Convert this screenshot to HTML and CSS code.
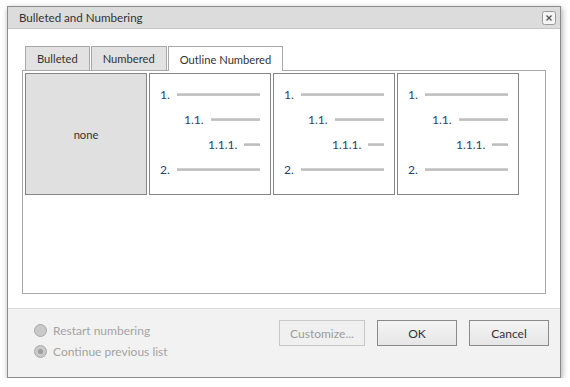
FILE: index.html
```html
<!DOCTYPE html>
<html>
<head>
<meta charset="utf-8">
<link rel="stylesheet" href="styles.css">
</head>
<body>
<div class="dialog">
  <div class="titlebar">
    <span class="title">Bulleted and Numbering</span>
    <span class="close">
      <svg width="14" height="14" viewBox="0 0 14 14"><rect x="0.5" y="0.5" width="13" height="13" rx="2" fill="#f4f4f4" stroke="#9a9a9a"/><path d="M4.5 4.5 L9.5 9.5 M9.5 4.5 L4.5 9.5" stroke="#555" stroke-width="1.3"/></svg>
    </span>
  </div>
  <div class="body">
    <div class="tabs">
      <div class="tab">Bulleted</div>
      <div class="tab">Numbered</div>
      <div class="tab active">Outline Numbered</div>
    </div>
    <div class="panel">
      <div class="item none">none</div>
      <div class="item">
        <div class="row l1"><span class="num">1.</span><span class="line"></span></div>
        <div class="row l2"><span class="num">1.1.</span><span class="line"></span></div>
        <div class="row l3"><span class="num">1.1.1.</span><span class="line"></span></div>
        <div class="row l1"><span class="num">2.</span><span class="line"></span></div>
      </div>
      <div class="item">
        <div class="row l1"><span class="num">1.</span><span class="line"></span></div>
        <div class="row l2"><span class="num">1.1.</span><span class="line"></span></div>
        <div class="row l3"><span class="num">1.1.1.</span><span class="line"></span></div>
        <div class="row l1"><span class="num">2.</span><span class="line"></span></div>
      </div>
      <div class="item">
        <div class="row l1"><span class="num">1.</span><span class="line"></span></div>
        <div class="row l2"><span class="num">1.1.</span><span class="line"></span></div>
        <div class="row l3"><span class="num">1.1.1.</span><span class="line"></span></div>
        <div class="row l1"><span class="num">2.</span><span class="line"></span></div>
      </div>
    </div>
  </div>
  <div class="footer">
    <div class="radios">
      <div class="radio"><span class="dot"></span>Restart numbering</div>
      <div class="radio"><span class="dot checked"></span>Continue previous list</div>
    </div>
    <div class="buttons">
      <div class="btn disabled wide">Customize...</div>
      <div class="btn">OK</div>
      <div class="btn">Cancel</div>
    </div>
  </div>
</div>
</body>
</html>
```
FILE: styles.css
```css
html, body {
  margin: 0;
  padding: 0;
  background: #ffffff;
}
body {
  font-family: "Lato", "Noto Sans", sans-serif;
  font-size: 11.2px;
  color: #333333;
}
.dialog {
  margin: 6px 0 0 7px;
  width: 554px;
  height: 372px;
  box-sizing: border-box;
  border: 1px solid #8c8c8c;
  background: #ffffff;
  box-shadow: 1px 2px 6px rgba(0,0,0,0.35);
  display: flex;
  flex-direction: column;
}
.titlebar {
  height: 22px;
  box-sizing: border-box;
  background: #dcdcdc;
  border-bottom: 1px solid #c4c4c4;
  display: flex;
  align-items: center;
  justify-content: space-between;
  padding: 0 4px 0 11px;
}
.title {
  color: #333;
  font-size: 11.6px;
}
.close {
  display: flex;
  margin-top: 1px;
}
.body {
  height: 279px;
  box-sizing: border-box;
  padding: 17px 14px 0 14px;
}
.tabs {
  display: flex;
  gap: 1px;
  padding-left: 3px;
  height: 24px;
}
.tab {
  box-sizing: border-box;
  height: 24px;
  padding: 0 11px;
  border: 1px solid #a8a8a8;
  border-bottom: none;
  background: #e2e2e2;
  display: flex;
  align-items: center;
  color: #333;
}
.tab.active {
  background: #ffffff;
  height: 25px;
  position: relative;
  z-index: 1;
}
.panel {
  height: 224px;
  box-sizing: border-box;
  border: 1px solid #a8a8a8;
  padding: 2px;
  display: flex;
  gap: 2px;
  align-items: flex-start;
}
.item {
  width: 122px;
  height: 122px;
  box-sizing: border-box;
  border: 1px solid #868686;
  background: #ffffff;
  padding: 8px 10px 0 10px;
}
.item.none {
  background: #e0e0e0;
  display: flex;
  align-items: center;
  justify-content: center;
  padding: 0;
}
.row {
  height: 25px;
  display: flex;
  align-items: center;
  gap: 7px;
}
.row.l2 { padding-left: 24px; }
.row.l3 { padding-left: 48px; }
.num {
  color: #1f4570;
  font-size: 12px;
}
.line {
  flex: 1;
  height: 3px;
  background: linear-gradient(#dadada, #bebebe 50%, #cacaca);
}
.footer {
  flex: 1;
  background: #f2f2f2;
  border-top: 1px solid #dcdcdc;
  display: flex;
  justify-content: space-between;
  padding: 11px 11px 0 26px;
}
.radios {
  display: flex;
  flex-direction: column;
  padding-top: 0;
}
.radio {
  height: 21px;
  display: flex;
  align-items: center;
  gap: 6px;
  color: #a4a4a4;
  font-size: 12px;
}
.dot {
  width: 13px;
  height: 13px;
  box-sizing: border-box;
  border-radius: 50%;
  border: 1px solid #a9a9a9;
  background: #c9c9c9;
  display: flex;
  align-items: center;
  justify-content: center;
}
.dot.checked::after {
  content: "";
  width: 5px;
  height: 5px;
  border-radius: 50%;
  background: #9e9e9e;
}
.buttons {
  display: flex;
  gap: 12px;
  align-items: flex-start;
}
.btn {
  width: 80px;
  height: 26px;
  box-sizing: border-box;
  border: 1px solid #8a8a8a;
  background: linear-gradient(#f4f4f4, #e6e6e6);
  display: flex;
  align-items: center;
  justify-content: center;
  color: #333;
  font-size: 12px;
}
.btn.wide {
  width: 86px;
}
.btn.disabled {
  border-color: #c8c8c8;
  color: #9c9c9c;
  background: #f0f0f0;
}
```
